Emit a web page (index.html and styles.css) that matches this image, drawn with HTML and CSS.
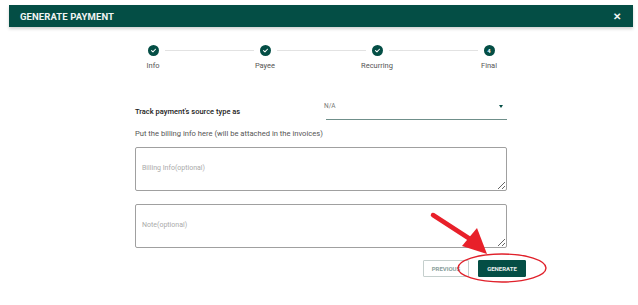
FILE: index.html
```html
<!DOCTYPE html>
<html>
<head>
<meta charset="utf-8">
<link rel="stylesheet" href="styles.css">
</head>
<body>
<div class="dialog">
  <div class="header">
    <span class="title">GENERATE PAYMENT</span>
    <span class="close">&#x2715;</span>
  </div>
  <div class="stepper">
    <div class="step">
      <div class="track"><span class="line left hidden"></span><span class="dot"><svg viewBox="0 0 10 10" width="7" height="7"><path d="M2.2 5.2 L4.2 7 L7.8 3.2" fill="none" stroke="#fff" stroke-width="1.5" stroke-linecap="round" stroke-linejoin="round"/></svg></span><span class="line right"></span></div>
      <div class="label">Info</div>
    </div>
    <div class="step">
      <div class="track"><span class="line left"></span><span class="dot"><svg viewBox="0 0 10 10" width="7" height="7"><path d="M2.2 5.2 L4.2 7 L7.8 3.2" fill="none" stroke="#fff" stroke-width="1.5" stroke-linecap="round" stroke-linejoin="round"/></svg></span><span class="line right"></span></div>
      <div class="label">Payee</div>
    </div>
    <div class="step">
      <div class="track"><span class="line left"></span><span class="dot"><svg viewBox="0 0 10 10" width="7" height="7"><path d="M2.2 5.2 L4.2 7 L7.8 3.2" fill="none" stroke="#fff" stroke-width="1.5" stroke-linecap="round" stroke-linejoin="round"/></svg></span><span class="line right"></span></div>
      <div class="label">Recurring</div>
    </div>
    <div class="step">
      <div class="track"><span class="line left"></span><span class="dot num">4</span><span class="line right hidden"></span></div>
      <div class="label">Final</div>
    </div>
  </div>
  <div class="form">
    <div class="row">
      <span class="row-label">Track payment's source type as</span>
      <div class="select"><span class="value">N/A</span><span class="caret"></span></div>
    </div>
    <div class="hint">Put the billing info here (will be attached in the invoices)</div>
    <textarea class="area" placeholder="Billing Info(optional)"></textarea>
    <textarea class="area second" placeholder="Note(optional)"></textarea>
    <div class="actions">
      <button class="btn prev">PREVIOUS</button>
      <button class="btn gen">GENERATE</button>
    </div>
  </div>
</div>
<svg class="annot" width="638" height="305" viewBox="0 0 638 305">
  <line x1="433" y1="215" x2="470" y2="239" stroke="#e8202a" stroke-width="4.5" stroke-linecap="round"/>
  <polygon points="487,254 462,246 477,228" fill="#e8202a"/>
  <ellipse cx="502" cy="268" rx="44" ry="14" fill="none" stroke="#e0202a" stroke-width="1.4"/>
</svg>
</body>
</html>
```
FILE: styles.css
```css
* { box-sizing: border-box; }
body {
  margin: 0;
  background: #fff;
  font-family: Roboto, "Liberation Sans", sans-serif;
  width: 638px;
  height: 305px;
  overflow: hidden;
  position: relative;
}
.dialog {
  margin: 5px 5px 0 9px;
  width: 624px;
}
.header {
  height: 22px;
  background: #044e45;
  display: flex;
  align-items: center;
  justify-content: space-between;
  padding: 0 12px 0 11px;
  box-shadow: 0 2px 3px rgba(0,0,0,0.18);
  color: #f0f4f3;
}
.title {
  font-size: 9.5px;
  font-weight: 700;
  letter-spacing: 0.1px;
}
.close {
  font-size: 10px;
  font-weight: 700;
}
.stepper {
  display: grid;
  grid-template-columns: repeat(4, 112px);
  justify-content: center;
  margin-top: 17px;
}
.step { display: flex; flex-direction: column; align-items: center; }
.track { display: flex; align-items: center; width: 100%; height: 12px; }
.line { flex: 1; height: 1px; background: #e2e2e2; }
.line.left { margin-right: 6px; }
.line.right { margin-left: 6px; }
.line.hidden { background: transparent; }
.dot {
  width: 11px;
  height: 11px;
  border-radius: 50%;
  background: #044e45;
  display: flex;
  align-items: center;
  justify-content: center;
  flex: none;
}
.dot.num { color: #fff; font-size: 6px; font-weight: 700; }
.label {
  margin-top: 5px;
  font-size: 7.5px;
  color: #555;
}
.form {
  width: 372px;
  margin: 27px auto 0;
  display: flex;
  flex-direction: column;
}
.row {
  display: flex;
  align-items: flex-end;
  height: 22px;
}
.row-label {
  width: 191px;
  font-size: 7.5px;
  font-weight: 500;
  color: #222;
  padding-bottom: 3px;
}
.select {
  flex: 1;
  height: 23px;
  border-bottom: 1.5px solid #6f8f8a;
  display: flex;
  align-items: center;
  justify-content: space-between;
  padding: 0 4px 4px 0;
  margin-bottom: -1px;
}
.value { font-size: 6.5px; color: #777; margin-left: -2px; }
.caret {
  width: 0; height: 0;
  border-left: 2.5px solid transparent;
  border-right: 2.5px solid transparent;
  border-top: 3px solid #044e45;
}
.hint {
  margin-top: 10px;
  font-size: 7.6px;
  color: #555;
}
.area {
  margin-top: 9px;
  width: 372px;
  height: 44px;
  border: 1px solid #a0a0a0;
  border-radius: 2px;
  padding: 16px 6px 0;
  font-family: Roboto, "Liberation Sans", sans-serif;
  font-size: 7px;
  resize: vertical;
}
.area::placeholder { color: #aaa; }
.area.second { margin-top: 13px; }
.actions {
  display: flex;
  justify-content: flex-end;
  gap: 9px;
  margin-top: 12px;
  margin-right: -19px;
}
.btn {
  height: 17px;
  font-family: Roboto, "Liberation Sans", sans-serif;
  font-size: 6px;
  font-weight: 700;
  padding: 0 7px;
  border-radius: 1px;
}
.prev {
  background: #fff;
  border: 1px solid #c5cfcd;
  color: #8aa09c;
  width: 46px;
}
.gen {
  background: #044e45;
  border: 1px solid #044e45;
  color: #e8efee;
  width: 48px;
}
.annot {
  position: absolute;
  left: 0;
  top: 0;
  pointer-events: none;
}
```
